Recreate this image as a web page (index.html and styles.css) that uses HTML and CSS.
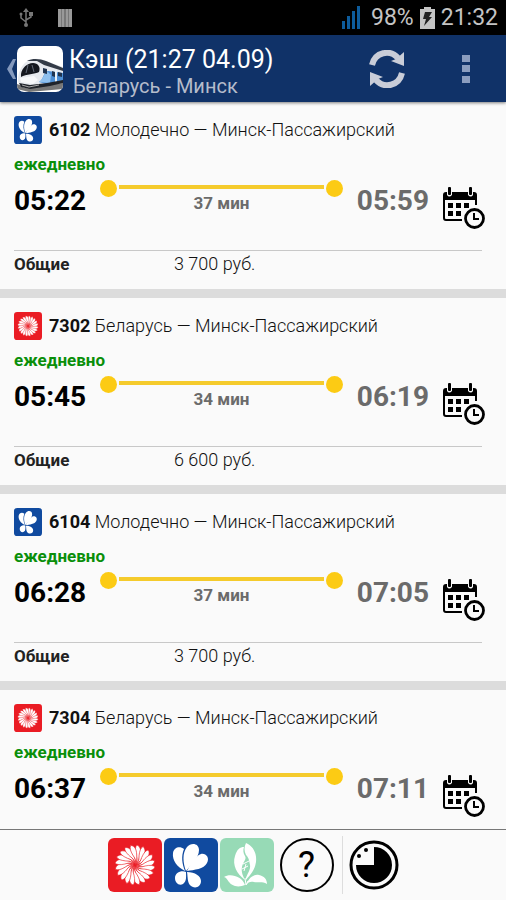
FILE: index.html
```html
<!DOCTYPE html>
<html lang="ru">
<head>
  <meta charset="UTF-8">
  <meta name="viewport" content="width=device-width, initial-scale=1">
  <title>Расписание: Беларусь - Минск</title>
  <link rel="stylesheet" href="styles.css">
</head>
<body>

  <!-- иконки -->
  <svg class="sprite" aria-hidden="true">
    <symbol id="cornflower" viewBox="0 0 54 54">
      <rect width="54" height="54" rx="6" fill="#104a9f"/>
      <g fill="#fff">
        <path d="M21 33C13 29 8 22 9 15C10 9 16 8 20 11C17 18 18 26 21 33Z"/>
        <path d="M22 33C19 25 18 15 23 9C27 4 35 5 35 12C35 20 27 27 22 33Z"/>
        <path d="M23 33C26 27 31 18 37 16C42 15 46 20 43 25C40 31 30 32 23 33Z"/>
        <path d="M22 34C17 32 11 35 11 40C11 45 15 48 19 46C23 43 22 38 22 34Z"/>
        <path d="M23 34C31 34 37 38 37 43C37 49 31 51 27 48C23 45 24 39 23 34Z"/>
      </g>
    </symbol>

    <symbol id="petals" viewBox="-27 -27 54 54">
      <path id="petal" d="M0 0C3 -3 2 -7 1 -10C0 -15 0 -18 2 -20C6 -18 6 -14 5 -10C4 -6 3 -2 0 0Z"/>
      <use href="#petal" transform="rotate(18)"/>
      <use href="#petal" transform="rotate(36)"/>
      <use href="#petal" transform="rotate(54)"/>
      <use href="#petal" transform="rotate(72)"/>
    </symbol>
    <symbol id="sunflower" viewBox="-27 -27 54 54">
      <rect x="-27" y="-27" width="54" height="54" rx="6" fill="#ea1c24"/>
      <g fill="#fff" stroke="#ea1c24" stroke-width="0.600">
        <use href="#petals" x="-27" y="-27" width="54" height="54"/>
        <use href="#petals" x="-27" y="-27" width="54" height="54" transform="rotate(90)"/>
        <use href="#petals" x="-27" y="-27" width="54" height="54" transform="rotate(180)"/>
        <use href="#petals" x="-27" y="-27" width="54" height="54" transform="rotate(270)"/>
      </g>
    </symbol>

    <symbol id="snowdrop" viewBox="0 0 54 54">
      <rect width="54" height="54" rx="6" fill="#97dab6"/>
      <g fill="#fff">
        <path d="M25 42C17 36 12 27 15 18C17 11 20 9 24 9C23 12 23 15 25 18C27 21 23 24 22 29C21 34 23 38 25 42Z"/>
        <path d="M26 5C33 8 37 15 36 24C35 32 30 37 26 42C25 38 31 33 30 27C29 22 29 20 26 17C24 13 24 9 26 5Z"/>
        <path d="M25 47C22 38 10 35 4 39C8 40 8 46 15 48C19 49 22 48 25 47Z"/>
        <path d="M26 47C29 39 34 36 39 37C44 38 47 41 47 46C42 43 38 45 34 44C31 43 28 44 26 47Z"/>
      </g>
      <path d="M25 40L26 47L28 43" fill="none" stroke="#fff" stroke-width="1"/>
      <path d="M23 26L29 23M22 31L28 28M24 33L26 26" fill="none" stroke="#fff" stroke-width="1"/>
    </symbol>

    <symbol id="calendar" viewBox="0 0 42 42">
      <path d="M0 13V8Q0 5 3 5H4V8Q6 11 9 8V5H25V8Q28 11 30 8V5H31Q34 5 34 8V13Z"/>
      <path d="M1 12V31Q1 33 3 33H19M33 12V18" fill="none" stroke="#000" stroke-width="2"/>
      <rect x="5" y="0" width="3" height="8" rx="1"/>
      <rect x="26" y="0" width="3" height="8" rx="1"/>
      <path d="M5 16h5v5h-5zM13 16h5v5h-5zM21 16h5v5h-5zM5 24h5v5h-5zM13 24h5v5h-5z"/>
      <circle cx="31.500" cy="31.500" r="9" fill="#fafafa" stroke="#000" stroke-width="2.800"/>
      <path d="M31 26V32H36" fill="none" stroke="#000" stroke-width="2"/>
    </symbol>
  </svg>

  <div class="status-bar">
    <svg class="usb" width="14" height="20" viewBox="0 0 14 20" fill="none" stroke="#777" stroke-width="1.500">
      <path d="M7 3V16M2 7V10L7 14M12 7V9L7 12"/>
      <path d="M7 0L10 4H4Z" fill="#777" stroke="none"/>
      <circle cx="7" cy="17" r="2" fill="#777" stroke="none"/>
      <circle cx="2" cy="6" r="1.500" fill="#777" stroke="none"/>
      <path d="M10 4h4v4h-4z" fill="#777" stroke="none"/>
    </svg>
    <svg width="14" height="18" viewBox="0 0 14 18" fill="#999">
      <rect width="14" height="18" fill="#777"/>
      <path d="M0 0h3v18h-3zM4 0h2v18h-2zM8 0h2v18h-2zM11 0h3v18h-3z"/>
    </svg>
    <div class="status-right">
      <svg class="signal" width="19" height="23" viewBox="0 0 19 23" fill="#0d5c9c">
        <path d="M0 15h3v8h-3zM5 10h3v13h-3zM10 5h3v18h-3zM15 0h3v23h-3z"/>
      </svg>
      <span>98%</span>
      <svg width="15" height="22" viewBox="0 0 15 22">
        <path d="M4 0H11V2H15V22H0V2H4Z" fill="#c4c4c4"/>
        <path d="M5 5H12L9 10H12L4 19L6 12H3Z" fill="#222"/>
      </svg>
      <span>21:32</span>
    </div>
  </div>

  <header class="app-bar">
    <button class="back" type="button" aria-label="Назад">
      <svg width="10" height="20" viewBox="0 0 10 20">
        <path d="M6 0H9L5 10L9 20H6L0 10Z" fill="#8499bd"/>
      </svg>
      <svg width="46" height="46" viewBox="0 0 46 46">
        <defs>
          <clipPath id="logo-clip"><rect width="46" height="46" rx="7"/></clipPath>
        </defs>
        <g clip-path="url(#logo-clip)">
          <rect width="46" height="46" fill="#fff"/>
          <path d="M0 38L8 41L46 35V43L12 46L0 43Z" fill="#777"/>
          <path d="M9 16C14 12 23 12 29 15L46 21V37L31 39L13 42C6 43 1 39 1 34C1 27 4 20 9 16Z" fill="#e6e9ee"/>
          <path d="M10 15C16 12 23 13 29 15L46 22V25L27 19L20 15Z" fill="#333b47"/>
          <path d="M4 28C5 22 10 17 16 17C21 17 24 21 22 26C18 28 9 28 4 31Z" fill="#151820"/>
          <path d="M11 19L9 27M15 19L17 26" stroke="#626977" stroke-width="1"/>
          <path d="M31 25L46 27V36L29 38L22 36C27 33 26 26 31 25Z" fill="#4d8fd5"/>
          <path d="M22 36C27 33 26 27 31 26L34 29L33 37Z" fill="#8fc0ee"/>
          <path d="M26 22L30 23V28L26 27ZM35 25L38 26V31L35 30ZM41 26L45 27V31L41 30Z" fill="#20344f"/>
          <path d="M39 24V36" stroke="#e9f2fa" stroke-width="2"/>
          <path d="M3 32L17 30L21 34L16 38L4 36Z" fill="#f7f8fa"/>
          <path d="M2 37L13 39L30 37L46 34V37L33 40L13 43L4 41Z" fill="#20242b"/>
          <path d="M5 39L12 41L22 39" fill="none" stroke="#aaa" stroke-width="1"/>
        </g>
      </svg>
    </button>
    <div class="heading">
      <h1>Кэш (21:27 04.09)</h1>
      <p>Беларусь - Минск</p>
    </div>
    <button class="refresh" type="button" aria-label="Обновить">
      <svg width="36" height="38" viewBox="0 0 36 38">
        <path d="M3 15C6 2 21 -1 29 8" fill="none" stroke="#c9cdd8" stroke-width="6"/>
        <path d="M35 2V16L22 11L27 9Z" fill="#c9cdd8"/>
        <path d="M33 23C30 36 15 39 7 30" fill="none" stroke="#c9cdd8" stroke-width="6"/>
        <path d="M1 36V22L14 27L9 29Z" fill="#c9cdd8"/>
      </svg>
    </button>
    <button class="more" type="button" aria-label="Меню">
      <svg width="8" height="28" viewBox="0 0 8 28" fill="#8b9dbf">
        <path d="M0 0h8v7h-8zM0 10h8v7h-8zM0 21h8v7h-8z"/>
      </svg>
    </button>
  </header>

  <main class="trains">
    <article class="train">
      <h2><svg width="28" height="28"><use href="#cornflower"/></svg><span><b>6102</b> Молодечно — Минск-Пассажирский</span></h2>
      <p class="days">ежедневно</p>
      <div class="times">
        <time class="departure">05:22</time>
        <div class="route">
          <div class="track"><i class="dot"></i><i class="line"></i><i class="dot"></i></div>
          <span class="duration">37 мин</span>
        </div>
        <time class="arrival">05:59</time>
        <button class="schedule" type="button" aria-label="Дни курсирования"><svg width="42" height="42"><use href="#calendar"/></svg></button>
      </div>
      <table class="prices">
        <tr><th scope="row">Общие</th><td>3 700 руб.</td></tr>
      </table>
    </article>

    <article class="train">
      <h2><svg width="28" height="28"><use href="#sunflower"/></svg><span><b>7302</b> Беларусь — Минск-Пассажирский</span></h2>
      <p class="days">ежедневно</p>
      <div class="times">
        <time class="departure">05:45</time>
        <div class="route">
          <div class="track"><i class="dot"></i><i class="line"></i><i class="dot"></i></div>
          <span class="duration">34 мин</span>
        </div>
        <time class="arrival">06:19</time>
        <button class="schedule" type="button" aria-label="Дни курсирования"><svg width="42" height="42"><use href="#calendar"/></svg></button>
      </div>
      <table class="prices">
        <tr><th scope="row">Общие</th><td>6 600 руб.</td></tr>
      </table>
    </article>

    <article class="train">
      <h2><svg width="28" height="28"><use href="#cornflower"/></svg><span><b>6104</b> Молодечно — Минск-Пассажирский</span></h2>
      <p class="days">ежедневно</p>
      <div class="times">
        <time class="departure">06:28</time>
        <div class="route">
          <div class="track"><i class="dot"></i><i class="line"></i><i class="dot"></i></div>
          <span class="duration">37 мин</span>
        </div>
        <time class="arrival">07:05</time>
        <button class="schedule" type="button" aria-label="Дни курсирования"><svg width="42" height="42"><use href="#calendar"/></svg></button>
      </div>
      <table class="prices">
        <tr><th scope="row">Общие</th><td>3 700 руб.</td></tr>
      </table>
    </article>

    <article class="train">
      <h2><svg width="28" height="28"><use href="#sunflower"/></svg><span><b>7304</b> Беларусь — Минск-Пассажирский</span></h2>
      <p class="days">ежедневно</p>
      <div class="times">
        <time class="departure">06:37</time>
        <div class="route">
          <div class="track"><i class="dot"></i><i class="line"></i><i class="dot"></i></div>
          <span class="duration">34 мин</span>
        </div>
        <time class="arrival">07:11</time>
        <button class="schedule" type="button" aria-label="Дни курсирования"><svg width="42" height="42"><use href="#calendar"/></svg></button>
      </div>
    </article>
  </main>

  <footer class="filters">
    <button type="button" aria-label="Региональные линии"><svg width="54" height="54"><use href="#sunflower"/></svg></button>
    <button type="button" aria-label="Межрегиональные линии"><svg width="54" height="54"><use href="#cornflower"/></svg></button>
    <button type="button" aria-label="Городские линии"><svg width="54" height="54"><use href="#snowdrop"/></svg></button>
    <button class="help" type="button">?</button>
    <button class="timer" type="button" aria-label="По времени">
      <svg width="50" height="50" viewBox="0 0 50 50">
        <circle cx="25" cy="25" r="23" fill="none" stroke="#000" stroke-width="3"/>
        <path d="M25 25V7A18 18 0 1 1 7 25Z"/>
        <circle cx="17" cy="10" r="2"/>
        <circle cx="10" cy="16" r="2"/>
      </svg>
    </button>
  </footer>

</body>
</html>
```
FILE: styles.css
```css
* {
  box-sizing: border-box;
}

body {
  margin: 0;
  height: 100vh;
  display: flex;
  flex-direction: column;
  background-color: #fafafa;
  color: #222;
  font-family: Roboto, "Noto Sans", sans-serif;
  font-size: 18px;
}

h1, h2, p {
  margin: 0;
  font-weight: 400;
}

button {
  padding: 0;
  border: none;
  background: none;
  font-family: inherit;
}

svg {
  display: block;
  flex-shrink: 0;
}

.sprite {
  position: absolute;
  width: 0;
  height: 0;
}

.status-bar {
  display: flex;
  flex-shrink: 0;
  align-items: center;
  gap: 25px;
  height: 35px;
  padding: 0 8px 0 19px;
  background-color: #000;
  color: #c4c4c4;
  font-size: 23px;
}

.status-right {
  display: flex;
  align-items: center;
  gap: 6px;
  margin-left: auto;
}

.signal {
  margin-right: 4px;
}

.app-bar {
  display: flex;
  flex-shrink: 0;
  align-items: center;
  height: 67px;
  padding: 0 36px 0 7px;
  background-color: #103268;
  box-shadow: 0 1px 3px rgba(0, 0, 0, 0.5);
  z-index: 1;
}

.back {
  display: flex;
  align-items: center;
}

.heading {
  flex: 1;
  padding: 4px 0 0 6px;
}

.heading h1 {
  color: #fff;
  font-size: 25px;
  line-height: 30px;
}

.heading p {
  padding-left: 4px;
  color: #b5bccb;
  font-size: 20px;
  line-height: 22px;
}

.more {
  margin-left: 57px;
}

.trains {
  flex: 1;
  min-height: 0;
  overflow: hidden;
}

.train {
  height: 196px;
  padding: 14px 21px 0 14px;
  border-bottom: 9px solid #dcdcdc;
}

.train h2 {
  display: flex;
  align-items: center;
  gap: 7px;
  color: #111;
  font-size: 18px;
  font-weight: 300;
  line-height: 26px;
}

.train h2 b {
  font-weight: 700;
}

.days {
  margin-top: 8px;
  color: #0a8f0a;
  font-size: 17px;
  font-weight: 700;
  line-height: 24px;
}

.times {
  display: flex;
  align-items: flex-start;
  height: 74px;
  padding-top: 4px;
}

.departure, .arrival {
  font-size: 28px;
  font-weight: 700;
  line-height: 42px;
}

.departure {
  color: #000;
}

.arrival {
  color: #6b6b6b;
}

.route {
  flex: 1;
  margin: 0 14px;
  text-align: center;
}

.track {
  display: flex;
  align-items: flex-start;
  gap: 2px;
}

.dot {
  width: 17px;
  height: 17px;
  border-radius: 50%;
  background-color: #fccb14;
}

.line {
  flex: 1;
  height: 4px;
  margin-top: 5px;
  background-color: #f5cb2c;
}

.duration {
  display: block;
  color: #6b6b6b;
  font-size: 17px;
  font-weight: 700;
  line-height: 12px;
}

.schedule {
  margin: 7px 0 0 14px;
}

.prices {
  width: calc(100% - 3px);
  border-top: 1px solid #c8c8c8;
  border-collapse: collapse;
  line-height: 26px;
}

.prices th {
  width: 160px;
  padding: 0;
  font-size: 17px;
  font-weight: 700;
  text-align: left;
}

.prices td {
  padding: 0;
  color: #111;
  font-size: 18px;
  font-weight: 300;
}

.filters {
  display: flex;
  flex-shrink: 0;
  align-items: center;
  justify-content: center;
  gap: 2px;
  height: 71px;
  border-top: 1px solid #777;
}

.help {
  width: 54px;
  height: 54px;
  margin-left: 4px;
  border: 2px solid #000;
  border-radius: 50%;
  color: #000;
  font-size: 36px;
  line-height: 50px;
}

.timer {
  margin-left: 6px;
  padding: 4px 0 4px 6px;
  border-left: 1px solid #ddd;
}
```
